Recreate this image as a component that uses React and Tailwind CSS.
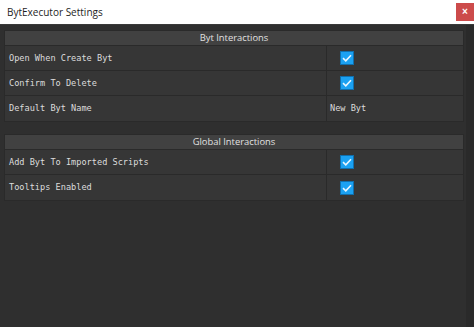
import React from 'react';

const MONO = "font-['DejaVu_Sans_Mono','Liberation_Mono',monospace]";

function Check() {
  return (
    <div className="flex h-[14px] w-[14px] items-center justify-center border border-[#0f6fae] bg-[#1ba1f2]">
      <svg width="10" height="8" viewBox="0 0 10 8" fill="none">
        <path d="M1 4.2 L3.8 6.8 L9 1.2" stroke="#e8f6ff" strokeWidth="1.6" />
      </svg>
    </div>
  );
}

function Row({ label, value, checked, last }) {
  return (
    <div className={`flex h-[25px] ${last ? '' : 'border-b border-[#2a2a2a]'}`}>
      <div className={`flex w-[322px] items-center border-r border-[#2a2a2a] pl-[4px] text-[8.6px] text-[#dcdcdc] ${MONO}`}>
        {label}
      </div>
      <div className="flex flex-1 items-center pl-[13px]">
        {checked ? <Check /> : <span className={`-ml-[10px] text-[8.6px] text-[#dcdcdc] ${MONO}`}>{value}</span>}
      </div>
    </div>
  );
}

function Section({ title, rows }) {
  return (
    <div className="w-[460px] border border-[#2a2a2a] bg-[#363636]">
      <div className="flex h-[15px] items-center justify-center border-b border-[#2a2a2a] bg-[#414141] font-['Open_Sans',sans-serif] text-[9.4px] text-[#e0e0e0]">
        {title}
      </div>
      {rows.map((r, i) => (
        <Row key={r.label} {...r} last={i === rows.length - 1} />
      ))}
    </div>
  );
}

export default function App() {
  return (
    <div className="flex h-[327px] w-[474px] flex-col overflow-hidden bg-[#2f2f2f]">
      {/* title bar */}
      <div className="flex h-[25px] shrink-0 items-center justify-between border-b border-[#3a3a3a] bg-white">
        <span className="pl-[7px] font-['Open_Sans',sans-serif] text-[10px] text-[#1e1e1e]">BytExecutor Settings</span>
        <div className="mb-[1px] flex h-[18px] w-[18px] items-center justify-center bg-[#cc4b4b] text-[10px] font-bold text-white font-['Liberation_Sans',sans-serif]">
          ×
        </div>
      </div>
      <div className="flex flex-1">
        <div className="flex flex-1 flex-col gap-[12px] pl-[4px] pt-[5px]">
          <Section
            title="Byt Interactions"
            rows={[
              { label: 'Open When Create Byt', checked: true },
              { label: 'Confirm To Delete', checked: true },
              { label: 'Default Byt Name', value: 'New Byt' },
            ]}
          />
          <Section
            title="Global Interactions"
            rows={[
              { label: 'Add Byt To Imported Scripts', checked: true },
              { label: 'Tooltips Enabled', checked: true },
            ]}
          />
        </div>
        <div className="w-[8px] bg-[#2a2a2a]" />
      </div>
    </div>
  );
}
